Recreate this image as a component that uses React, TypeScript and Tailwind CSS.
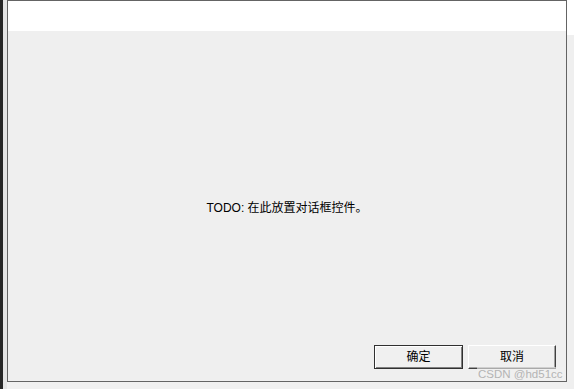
import React from "react";

export default function App() {
  const font = { fontFamily: '"Liberation Sans", "Noto Sans CJK SC", sans-serif' };
  return (
    <div className="relative w-[574px] h-[389px] bg-[#f0f0f0] flex overflow-hidden" style={font}>
      <div className="w-[3px] h-full bg-[#262626]" />
      <div className="w-[4px] h-full bg-[#e4e4e4]" />
      <div className="w-[560px] h-[382px] border border-[#646464] flex flex-col">
        <div className="h-[30px] bg-white" />
        <div className="flex-1 bg-[#efefef] grid">
          <div className="col-start-1 row-start-1 flex items-center justify-center text-[12px] text-black leading-none pt-[3px]">
            TODO: 在此放置对话框控件。
          </div>
          <div className="col-start-1 row-start-1 self-end justify-self-end flex gap-[5px] mr-[10px] mb-[12px]">
            <button className="w-[89px] h-[24px] bg-[#f0f0f0] border border-[#303030] shadow-[inset_1px_1px_0_#ffffff,inset_-1px_-1px_0_#808080] text-[12px] text-black leading-none">
              确定
            </button>
            <button className="w-[88px] h-[24px] bg-[#f0f0f0] border-t border-l border-[#ffffff] border-r border-b border-r-[#404040] border-b-[#404040] shadow-[inset_-1px_-1px_0_#a0a0a0] text-[12px] text-black leading-none">
              取消
            </button>
          </div>
        </div>
      </div>
      <div className="flex-1 flex flex-col">
        <div className="h-[35px] bg-white" />
        <div className="flex-1 bg-[#efefef]" />
      </div>
      <div className="absolute left-[477px] top-[367px] text-[11.5px] leading-[14px] text-[#b4b4b4] bg-[#f0f0f0]/60 px-[1px]">
        CSDN @hd51cc
      </div>
    </div>
  );
}
